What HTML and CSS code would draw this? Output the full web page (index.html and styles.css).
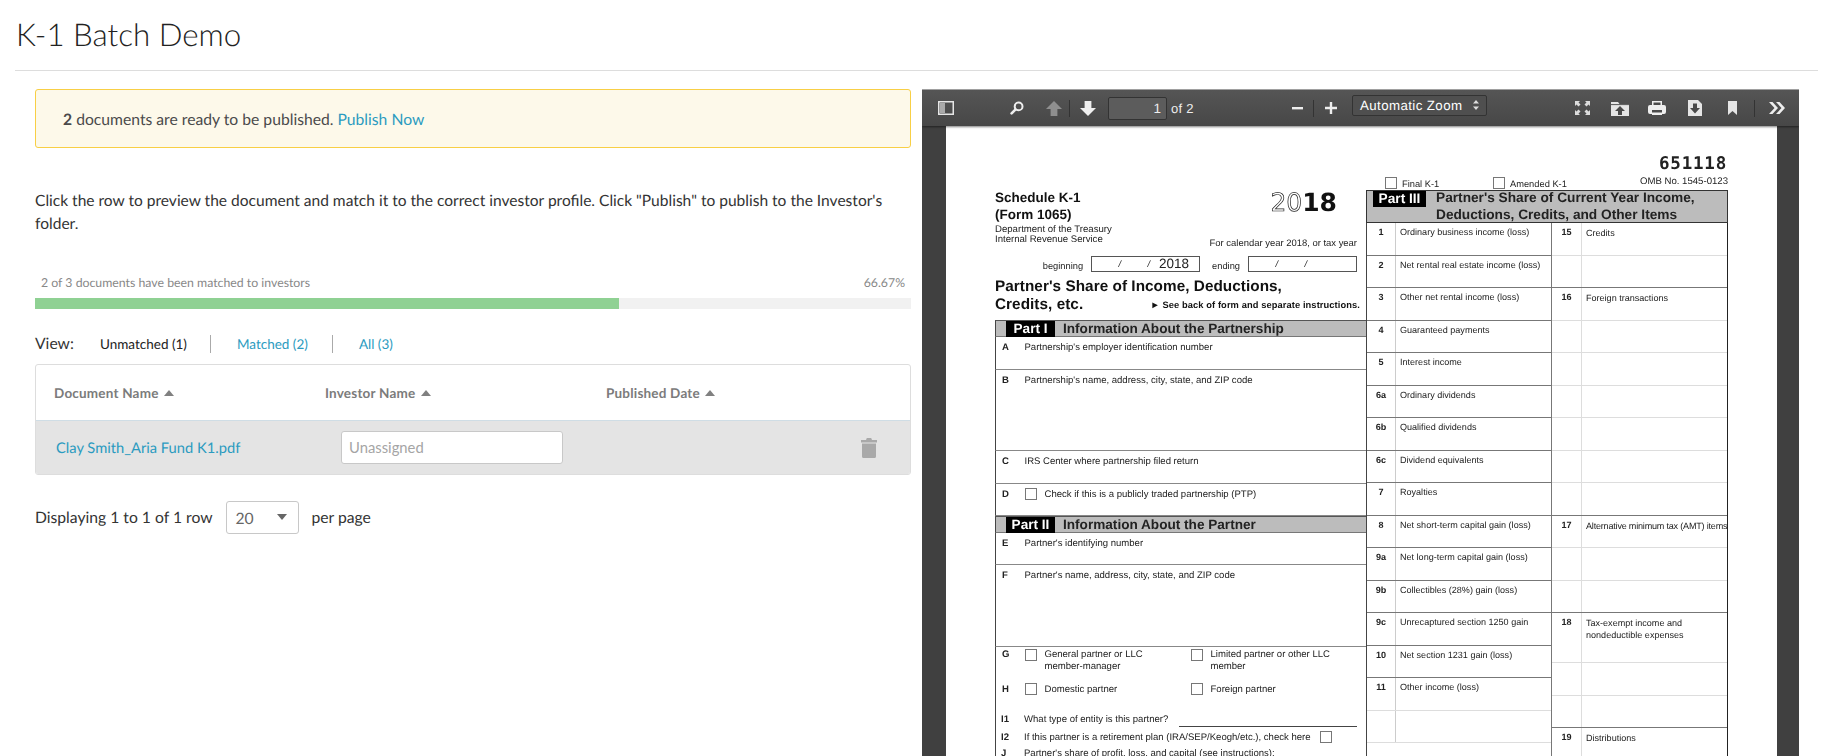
FILE: index.html
```html
<!DOCTYPE html>
<html lang="en">
<head>
<meta charset="utf-8">
<title>K-1 Batch Demo</title>
<link rel="stylesheet" href="styles.css">
</head>
<body>
<div class="page">
  <header class="page-head"><h1>K-1 Batch Demo</h1></header>
  <main class="main">
    <section class="left">
      <div class="alert"><b>2</b> documents are ready to be published. <a href="#">Publish Now</a></div>
      <p class="intro">Click the row to preview the document and match it to the correct investor profile. Click "Publish" to publish to the Investor's folder.</p>
      <div class="progress-label"><span>2 of 3 documents have been matched to investors</span><span>66.67%</span></div>
      <div class="progress"><div class="progress-fill" style="width:66.67%"></div></div>
      <nav class="view">
        <span class="view-label">View:</span>
        <span class="tab current">Unmatched (1)</span>
        <a class="tab" href="#">Matched (2)</a>
        <a class="tab last" href="#">All (3)</a>
      </nav>
      <div class="table">
        <div class="thead">
          <div class="th c1">Document Name <i class="sort"></i></div>
          <div class="th c2">Investor Name <i class="sort"></i></div>
          <div class="th c3">Published Date <i class="sort"></i></div>
        </div>
        <div class="tr">
          <a class="td-doc" href="#">Clay Smith_Aria Fund K1.pdf</a>
          <div class="td-inv"><input class="unassigned" placeholder="Unassigned"></div>
          <svg class="trash" viewBox="0 0 16 21" width="16" height="21"><path d="M0 3h16v2.400H0zM5 3 5.800 1h4.400L11 3zM1 6.400h14v13a1.600 1.600 0 0 1-1.600 1.600H2.600A1.600 1.600 0 0 1 1 19.400z" fill="#a9a9a9"/></svg>
        </div>
      </div>
      <div class="pager">
        <span>Displaying 1 to 1 of 1 row</span>
        <div class="select"><span>20</span><i class="caret"></i></div>
        <span>per page</span>
      </div>
    </section>

    <section class="viewer">
      <div class="toolbar">
        <svg class="ti sidebar" viewBox="0 0 16 14" width="16" height="14"><rect x=".75" y=".75" width="14.5" height="12.5" fill="none" stroke="#e6e6e6" stroke-width="1.5"/><rect x="2" y="2" width="5" height="10" fill="#aaa"/></svg>
        <svg class="ti search" viewBox="0 0 14 14" width="14" height="14"><circle cx="8.6" cy="5.4" r="3.9" fill="none" stroke="#eee" stroke-width="2"/><path d="M5.6 8.4 1.6 12.4" stroke="#eee" stroke-width="2.6" stroke-linecap="round"/></svg>
        <svg class="ti up" viewBox="0 0 16 15" width="16" height="15"><path d="M8 0 16 8h-4.600v7H4.600V8H0z" fill="#8f8f8f"/></svg>
        <i class="tsep s1"></i>
        <svg class="ti down" viewBox="0 0 16 15" width="16" height="15"><path d="M8 15 16 7h-4.600V0H4.600v7H0z" fill="#f0f0f0"/></svg>
        <div class="page-input">1</div>
        <span class="of">of 2</span>
        <svg class="ti minus" viewBox="0 0 11 3" width="11" height="3"><rect width="11" height="2.400" fill="#eee"/></svg>
        <i class="tsep s2"></i>
        <svg class="ti plus" viewBox="0 0 12 12" width="12" height="12"><path d="M0 4.800h12v2.400H0zM4.800 0h2.400v12H4.800z" fill="#eee"/></svg>
        <div class="zoom-select"><span>Automatic Zoom</span><svg viewBox="0 0 6 10" width="6" height="10"><path d="M3 0 6 3.500H0zM3 10 0 6.500h6z" fill="#ddd"/></svg></div>
        <svg class="ti full" viewBox="0 0 15 14" width="15" height="14"><path d="M0 0h5L3.500 1.500 5.500 3.500 3.500 5.500 1.500 3.500 0 5zM15 0v5L13.500 3.500 11.500 5.500 9.500 3.500 11.500 1.500 10 0zM0 14V9L1.500 10.500 3.500 8.500 5.500 10.500 3.500 12.500 5 14zM15 14h-5L11.500 12.500 9.500 10.500 11.500 8.500 13.500 10.500 15 9z" fill="#ddd"/></svg>
        <svg class="ti open" viewBox="0 0 18 15" width="18" height="15"><path d="M0 1h7l1.500 2H18v12H0z" fill="#e6e6e6"/><path d="M0 3.600h18" stroke="#555"/><path d="M9 5 14 10h-3v4H7v-4H4z" fill="#4a4a4a"/></svg>
        <svg class="ti print" viewBox="0 0 18 14" width="18" height="14"><path d="M4 0h10v4h2a2 2 0 0 1 2 2v5a2 2 0 0 1-2 2h-2v1H4v-1H2a2 2 0 0 1-2-2V6a2 2 0 0 1 2-2h2z" fill="#eee"/><path d="M5.500 1.500h7V4h-7z" fill="#4a4a4a"/><rect x="4" y="9" width="10" height="2.500" fill="#4a4a4a"/></svg>
        <svg class="ti save" viewBox="0 0 14 16" width="14" height="16"><path d="M0 0h10l4 4v12H0z" fill="#e6e6e6"/><path d="M5 3.500h4V8h3l-5 5.500L2 8h3z" fill="#4a4a4a"/></svg>
        <svg class="ti mark" viewBox="0 0 9 14" width="9" height="14"><path d="M0 0h9v14L4.500 10 0 14z" fill="#e6e6e6"/></svg>
        <i class="tsep s3"></i>
        <svg class="ti more" viewBox="0 0 16 12" width="16" height="12"><path d="M0 0h3.500L9 6 3.500 12H0l5.500-6zM7 0h3.500L16 6l-5.500 6H7l5.500-6z" fill="#eee"/></svg>
      </div>
      <div class="scroll">
        <div class="pdf-page">
          <div class="form">
            <div class="form-left">
              <div class="fhead">
                <div class="fhead-l">
                  <div class="sch">Schedule K-1<br>(Form 1065)</div>
                  <div class="dept">Department of the Treasury<br>Internal Revenue Service</div>
                </div>
                <div class="fhead-r">
                  <div class="year"><span class="outline">20</span><span class="solid">18</span></div>
                  <div class="cal">For calendar year 2018, or tax year</div>
                </div>
              </div>
              <div class="dates">
                <span class="d-label">beginning</span>
                <div class="d-box"><i>/</i><i>/</i><b>2018</b></div>
                <span class="d-label d-end">ending</span>
                <div class="d-box"><i>/</i><i>/</i></div>
              </div>
              <div class="fh">Partner's Share of Income, Deductions,</div>
              <div class="fh fh2"><span>Credits, etc.</span><small>&#9658; See back of form and separate instructions.</small></div>
              <div class="part"><b>Part I</b><span>Information About the Partnership</span></div>
              <div class="row r33"><b>A</b><span>Partnership's employer identification number</span></div>
              <div class="row r81"><b>B</b><span>Partnership's name, address, city, state, and ZIP code</span></div>
              <div class="row r33"><b>C</b><span>IRS Center where partnership filed return</span></div>
              <div class="row r32"><b>D</b><em class="cb"></em><span>Check if this is a publicly traded partnership (PTP)</span></div>
              <div class="part p2"><b>Part II</b><span>Information About the Partner</span></div>
              <div class="row r32"><b>E</b><span>Partner's identifying number</span></div>
              <div class="row r82"><b>F</b><span>Partner's name, address, city, state, and ZIP code</span></div>
              <div class="opts og"><b>G</b><em class="cb"></em><span class="o1">General partner or LLC<br>member-manager</span><em class="cb"></em><span>Limited partner or other LLC<br>member</span></div>
              <div class="opts oh"><b>H</b><em class="cb"></em><span class="o1">Domestic partner</span><em class="cb"></em><span>Foreign partner</span></div>
              <div class="line l1"><b>I1</b><span>What type of entity is this partner?</span><u></u></div>
              <div class="line l2"><b>I2</b><span>If this partner is a retirement plan (IRA/SEP/Keogh/etc.), check here</span><em class="cb"></em></div>
              <div class="line l3"><b>J</b><span>Partner's share of profit, loss, and capital (see instructions):</span></div>
            </div>
            <div class="form-right">
              <div class="rhead">
                <div class="code">651118</div>
                <div class="omb">OMB No. 1545-0123</div>
                <div class="kchecks"><em class="cb"></em><span class="fk">Final K-1</span><em class="cb"></em><span>Amended K-1</span></div>
              </div>
              <div class="part3"><b>Part III</b><span>Partner's Share of Current Year Income,<br>Deductions, Credits, and Other Items</span></div>
              <div class="cols">
                <div class="col ca">
                  <div class="cell"><b>1</b><span>Ordinary business income (loss)</span></div>
                  <div class="cell"><b>2</b><span>Net rental real estate income (loss)</span></div>
                  <div class="cell"><b>3</b><span>Other net rental income (loss)</span></div>
                  <div class="cell"><b>4</b><span>Guaranteed payments</span></div>
                  <div class="cell"><b>5</b><span>Interest income</span></div>
                  <div class="cell"><b>6a</b><span>Ordinary dividends</span></div>
                  <div class="cell"><b>6b</b><span>Qualified dividends</span></div>
                  <div class="cell"><b>6c</b><span>Dividend equivalents</span></div>
                  <div class="cell"><b>7</b><span>Royalties</span></div>
                  <div class="cell"><b>8</b><span>Net short-term capital gain (loss)</span></div>
                  <div class="cell"><b>9a</b><span>Net long-term capital gain (loss)</span></div>
                  <div class="cell"><b>9b</b><span>Collectibles (28%) gain (loss)</span></div>
                  <div class="cell"><b>9c</b><span>Unrecaptured section 1250 gain</span></div>
                  <div class="cell"><b>10</b><span>Net section 1231 gain (loss)</span></div>
                  <div class="cell lt"><b>11</b><span>Other income (loss)</span></div>
                  <div class="cell lt"><b></b><span></span></div>
                </div>
                <div class="col cb-col">
                  <div class="cell lt"><b>15</b><span>Credits</span></div>
                  <div class="cell"><b></b><span></span></div>
                  <div class="cell lt"><b>16</b><span>Foreign transactions</span></div>
                  <div class="cell lt"><b></b><span></span></div>
                  <div class="cell lt"><b></b><span></span></div>
                  <div class="cell lt"><b></b><span></span></div>
                  <div class="cell lt"><b></b><span></span></div>
                  <div class="cell lt"><b></b><span></span></div>
                  <div class="cell"><b></b><span></span></div>
                  <div class="cell lt"><b>17</b><span class="tight">Alternative minimum tax (AMT) items</span></div>
                  <div class="cell lt"><b></b><span></span></div>
                  <div class="cell"><b></b><span></span></div>
                  <div class="cell lt tall"><b>18</b><span>Tax-exempt income and<br>nondeductible expenses</span></div>
                  <div class="cell lt"><b></b><span></span></div>
                  <div class="cell"><b></b><span></span></div>
                  <div class="cell lt"><b>19</b><span>Distributions</span></div>
                </div>
              </div>
            </div>
          </div>
        </div>
      </div>
    </section>
  </main>
</div>
</body>
</html>
```
FILE: styles.css
```css
* { box-sizing: border-box; }
html, body { margin: 0; height: 100%; background: #fff; }
body { font-family: Lato, "Open Sans", sans-serif; color: #333; overflow: hidden; text-rendering: geometricPrecision; }
a { color: #2b9bc0; text-decoration: none; }

.page { height: 756px; overflow: hidden; padding: 0 21px 0 15px; }
.page-head { height: 71px; border-bottom: 1px solid #ddd; display: flex; align-items: center; padding-bottom: 2px; }
.page-head h1 { margin: 0 0 0 1px; font-size: 31.300px; font-weight: 300; color: #222; line-height: 36px; }
.main { display: flex; gap: 11px; height: 685px; }

.left { width: 896px; padding: 18px 0 0 20px; flex: none; font-size: 15.700px; }
.alert { height: 59px; border: 1px solid #f8cf45; border-radius: 3px; background: #fdf9ea; padding: 2px 0 0 27px; display: flex; align-items: center; white-space: pre-wrap; color: #4a4a4a; }
.alert b { font-weight: 700; }
.intro { margin: 42px 0 0; line-height: 23px; color: #333; font-size: 15.550px; }
.progress-label { display: flex; justify-content: space-between; margin-top: 39px; padding: 0 6px; font-size: 12.300px; line-height: 16px; color: #888; }
.progress { height: 11px; margin-top: 7px; background: #f1f1f1; }
.progress-fill { height: 100%; background: #8fd193; }
.view { display: flex; align-items: center; height: 18px; margin-top: 26px; font-size: 13.500px; }
.view-label { font-size: 15.700px; width: 65px; }
.tab { padding-right: 24px; margin-right: 26px; height: 18px; line-height: 18px; border-right: 1px solid #aaa; }
.tab.current { color: #222; padding-right: 23px; margin-right: 26px; }
.tab.last { border: 0; }

.table { height: 111px; margin-top: 11px; border: 1px solid #ddd; border-radius: 3px; overflow: hidden; }
.thead { height: 56px; display: flex; align-items: center; border-bottom: 1px solid #cfdde5; }
.th { font-size: 13.500px; font-weight: 700; color: #7b7b7b; letter-spacing: .2px; }
.c1 { width: 270px; padding-left: 18px; }
.c2 { width: 300px; padding-left: 19px; }
.c3 { padding-left: 0; }
.sort { display: inline-block; margin-left: 2px; vertical-align: 2px; border: 5px solid transparent; border-top: 0; border-bottom: 6px solid #808080; }
.tr { height: 53px; background: #e4e4e4; display: flex; align-items: center; position: relative; }
.td-doc { width: 305px; padding-left: 20px; font-size: 14.700px; flex: none; }
.unassigned { display: block; width: 222px; height: 33px; border: 1px solid #c8c8c8; border-radius: 3px; background: #fff; padding: 0 7px 2px; font: 14.800px Lato, sans-serif; }
.unassigned::placeholder { color: #a5a5a5; opacity: 1; }
.trash { margin-left: auto; margin-right: 33px; }

.pager { display: flex; align-items: center; margin-top: 26px; height: 33px; }
.select { width: 73px; height: 33px; margin: 0 13px 0 13px; border: 1px solid #c8c8c8; border-radius: 3px; display: flex; align-items: center; justify-content: space-between; padding: 2px 11px 0 9px; color: #666; }
.caret { margin-top: -4px; border: 5px solid transparent; border-bottom: 0; border-top: 6px solid #666; }

.viewer { width: 877px; flex: none; margin-top: 18px; background: #404040; overflow: hidden; height: 667px; }
.toolbar { height: 37px; display: flex; align-items: center; position: relative; border-top: 1.500px solid #a0a0a0; background: linear-gradient(#555, #474747); box-shadow: 0 1px 2px rgba(0,0,0,.5); z-index: 2; color: #eee; font-family: "Liberation Sans", sans-serif; }
.ti { flex: none; }
.sidebar { margin-left: 16px; }
.search { margin-left: 56px; }
.up { margin-left: 22px; }
.tsep { width: 1px; height: 17px; background: #333; flex: none; }
.s1 { margin: 0 10px 0 7px; }
.page-input { width: 59px; height: 23px; margin-left: 12px; border: 1px solid #333; border-radius: 2px; background: #5c5c5c; text-align: right; padding-right: 5px; font-size: 13.500px; line-height: 21px; }
.of { margin-left: 4px; font-size: 13px; letter-spacing: .3px; width: 121px; }
.s2 { margin: 0 11px 0 10px; }
.zoom-select { width: 135px; height: 21px; margin: -6px 88px 0 15px; border: 1px solid #333; border-radius: 2px; display: flex; align-items: center; justify-content: space-between; padding: 0 7px 0 7px; font-size: 13.300px; letter-spacing: .4px; background: #4f4f4f; color: #fff; flex: none; }
.open { margin-left: 21px; }
.print { margin-left: 19px; }
.save { margin-left: 22px; }
.mark { margin-left: 26px; }
.s3 { margin: 0 14px 0 17px; }

.scroll { height: 630px; padding: 0 22px 0 24px; overflow: hidden; }
.pdf-page { background: #fff; height: 100%; overflow: hidden; filter: blur(.3px); }
.form { display: flex; margin-left: 49px; width: 733px; font-family: "Liberation Sans", Arial, sans-serif; color: #222; font-size: 9.050px; line-height: 10px; white-space: nowrap; }
.form-left { width: 371px; flex: none; font-size: 9.550px; }
.form-right { width: 362px; flex: none; }
b { font-weight: 700; }
em { font-style: normal; }
.cb { display: block; flex: none; width: 12px; height: 12px; border: 1px solid #777; background: #fff; }

.fhead { display: flex; justify-content: space-between; padding: 63px 9px 0 0; height: 123px; }
.sch { font-size: 13.500px; font-weight: 700; line-height: 17px; color: #111; }
.dept { font-size: 9.600px; line-height: 10px; margin-top: 2px; }
.fhead-r { display: flex; flex-direction: column; align-items: flex-end; justify-content: space-between; }
.year { margin: 1px 20px 0 0; font-size: 25px; line-height: 26px; white-space: nowrap; font-family: "DejaVu Sans", sans-serif; }
.outline { color: #fff; -webkit-text-stroke: .7px #222; }
.solid { font-weight: 700; color: #111; }
.cal { font-size: 9.450px; }

.dates { display: flex; height: 16px; align-items: center; justify-content: flex-end; padding-right: 9px; margin-top: 7px; font-size: 9.300px; }
.d-label { margin-top: 4px; }
.d-end { margin: 4px 8px 0 12px; }
.d-box { width: 109px; height: 16px; margin-left: 8px; border: 1px solid #555; display: flex; align-items: center; }
.d-end + .d-box { margin-left: 0; }
.d-box i { width: 29px; text-align: right; }
.d-box b { font-weight: 400; font-size: 13.500px; margin-left: 9px; }
.fh { font-size: 15.300px; font-weight: 700; line-height: 18px; letter-spacing: .05px; color: #111; margin-top: 6px; }
.fh2 { display: flex; justify-content: space-between; margin-top: 0; align-items: center; padding-right: 6px; }
.fh small { font-size: 9.300px; letter-spacing: .1px; }
.part { height: 17px; margin-top: 6px; display: flex; align-items: center; background: #bcbcbc; border-top: 1.500px solid #555; border-bottom: 1px solid #777; border-left: 1.500px solid #444; padding-left: 10px; font-size: 13.600px; font-weight: 700; color: #222; }
.part.p2 { margin-top: 0; }
.part b { background: #000; color: #fff; height: 16px; width: 49px; text-align: center; line-height: 15px; margin-right: 8px; }
.row { display: flex; border-bottom: 1px solid #888; padding-top: 6px; border-left: 1.500px solid #444; }
.row b, .opts b { width: 28.500px; padding-left: 6px; flex: none; }
.row .cb { margin: -2px 8px 0 0; }
.r33 { height: 33px; }
.r32 { height: 32px; }
.r81 { height: 81px; }
.r82 { height: 82px; }
.opts, .line { display: flex; border-left: 1.500px solid #444; }
.opts .cb { margin: 0 8px 0 0; }
.o1 { width: 146px; flex: none; }
.og { height: 36px; padding-top: 2px; line-height: 11.500px; }
.oh { height: 28px; line-height: 13px; }
.line { align-items: center; height: 18px; }
.line b { width: 28px; padding-left: 5px; flex: none; }
.l1 u { display: block; height: 1px; background: #444; flex: 1; margin: 12px 9px 0 11px; }
.l2 .cb { margin: -3px 0 0 9px; }
.l3 { height: 14px; }

.rhead { height: 64px; position: relative; }
.code { position: absolute; right: 1px; top: 28px; font: 700 17.500px/20px "DejaVu Sans Mono", monospace; letter-spacing: .8px; }
.omb { position: absolute; right: 0; top: 51px; font-size: 9.600px; }
.kchecks { position: absolute; left: 19px; bottom: 1px; display: flex; align-items: flex-end; line-height: 9px; font-size: 9.300px; }
.fk { width: 96px; }
.kchecks span { padding-left: 5px; }
.part3 { height: 33px; background: #bcbcbc; display: flex; border: 1.500px solid #333; border-width: 1.500px 1.500px 1px 1.500px; padding-left: 6px; font-size: 13.700px; font-weight: 700; line-height: 16.800px; color: #222; }
.part3 span { margin-top: -1px; }
.part3 b { background: #000; color: #fff; width: 53px; height: 16px; text-align: center; line-height: 15px; margin-right: 10px; flex: none; }
.cols { display: flex; border-right: 1.500px solid #222; }
.col { flex: none; }
.ca { width: 186px; border-left: 1.500px solid #444; border-right: 1px solid #777; }
.cb-col { width: 175px; }
.cell { display: flex; height: 32.500px; border-bottom: 1px solid #777; }
.cell.lt { border-bottom-color: #ddd; }
.cell.tall { height: 50px; }
.cell b { width: 28px; flex: none; text-align: center; padding-top: 4px; }
.cell span { flex: 1; padding: 4px 0 0 4px; border-left: 1px solid #ccc; white-space: nowrap; }
.cb-col .cell span { border-left-color: #ddd; line-height: 12px; }
.cb-col .cell b { width: 29px; }
.tight { letter-spacing: -.2px; }
```
